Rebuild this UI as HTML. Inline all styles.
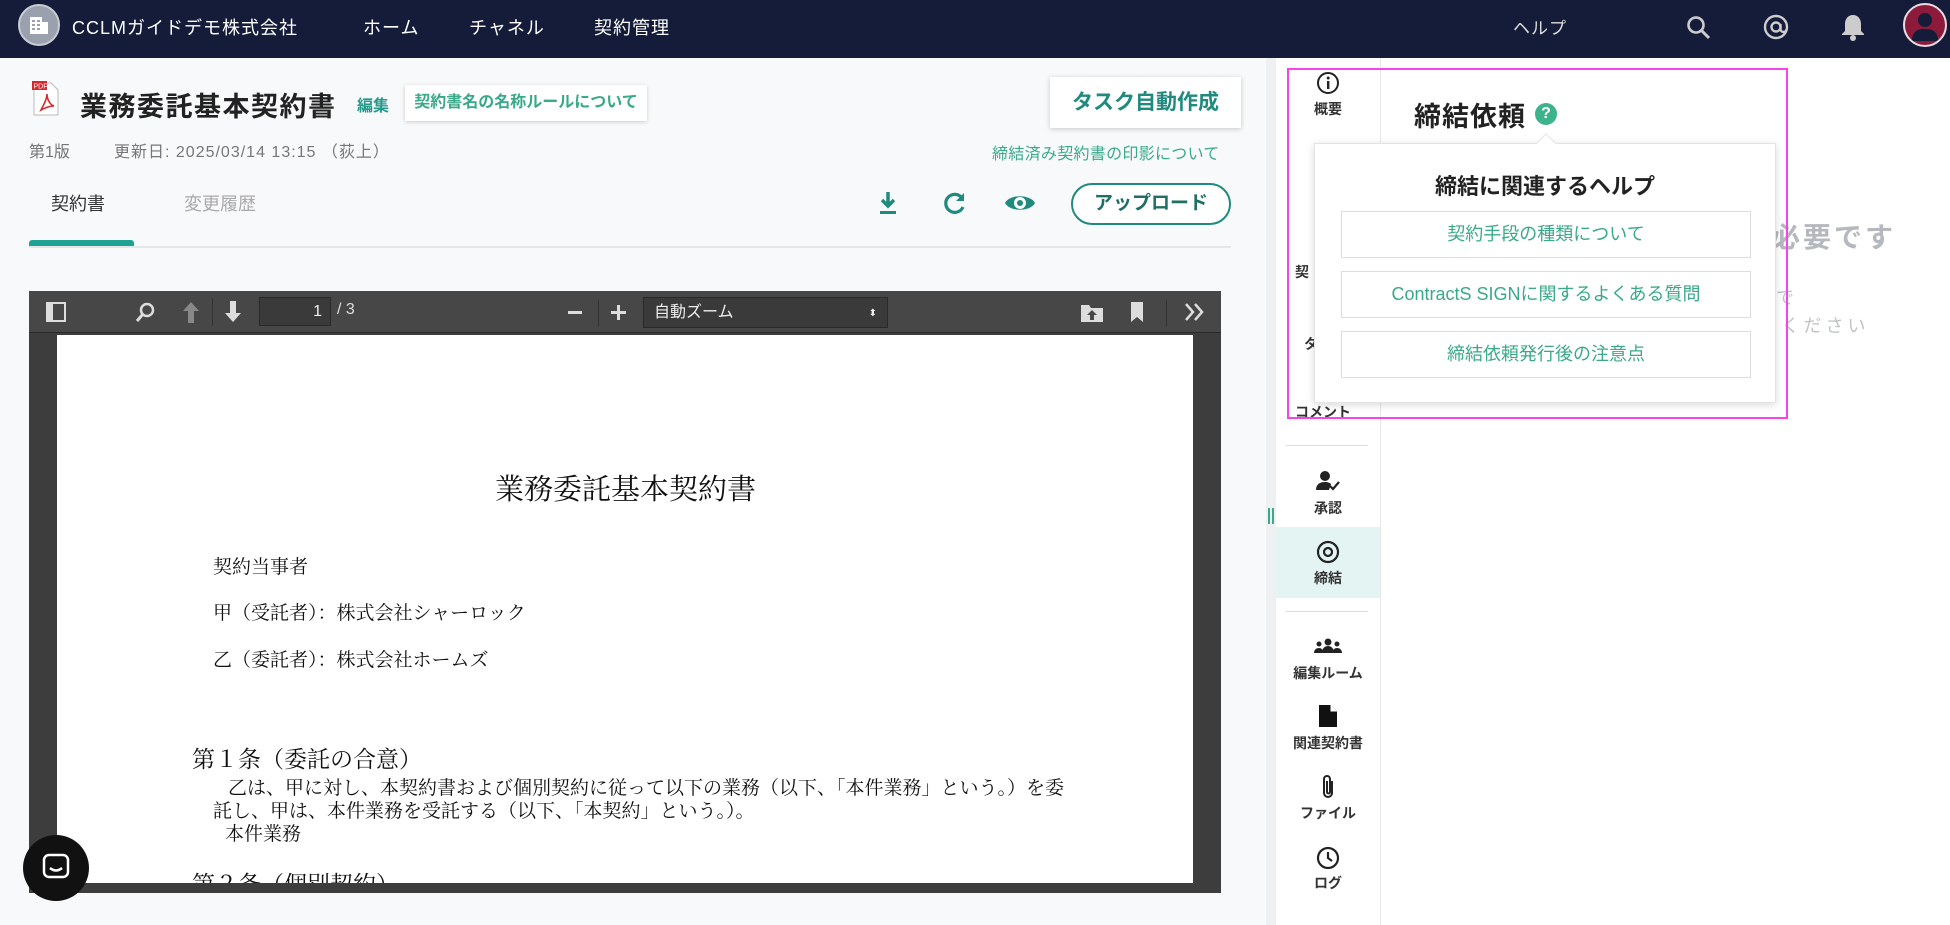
<!DOCTYPE html>
<html><head><meta charset="utf-8"><style>
*{margin:0;padding:0;box-sizing:border-box}
body{width:1950px;height:925px;overflow:hidden;background:#fff;font-family:"Liberation Sans","Noto Sans CJK JP",sans-serif;position:relative;color:#333}
.a{position:absolute;white-space:nowrap}
.nav{left:0;top:0;width:1950px;height:58px;background:#141c3a}
.nt{color:#fff;font-size:18px;top:14px;letter-spacing:1px}
.left{left:0;top:58px;width:1266px;height:867px;background:#f7f9fa}
.teal{color:#23998a}
.sb{font-size:14px;color:#333;text-align:center;width:104px;left:1276px;font-weight:bold}
.hb{left:1341px;width:410px;height:47px;border:1px solid #ddd;background:#fff;color:#3aa98a;font-size:18px;text-align:center;line-height:45px}
.pdf{font-family:"Liberation Serif","Noto Serif CJK SC",serif;color:#111}
</style></head><body>
<div class="a nav"></div>
<div class="a" style="left:18px;top:4px;width:42px;height:42px;border-radius:50%;background:#9aa0ad;border:2px solid #c8ccd4"></div>
<svg class="a" style="left:28px;top:14px" width="22" height="22" viewBox="0 0 22 22"><rect x="2" y="3" width="12" height="17" fill="#fff"/><rect x="14" y="8" width="6" height="12" fill="#fff"/><g fill="#9aa0ad"><rect x="4" y="6" width="3" height="2"/><rect x="9" y="6" width="3" height="2"/><rect x="4" y="10" width="3" height="2"/><rect x="9" y="10" width="3" height="2"/><rect x="4" y="14" width="3" height="2"/><rect x="9" y="14" width="3" height="2"/></g></svg>
<div class="a nt" style="left:72px">CCLMガイドデモ株式会社</div>
<div class="a nt" style="left:363px">ホーム</div>
<div class="a nt" style="left:469px">チャネル</div>
<div class="a nt" style="left:594px">契約管理</div>
<div class="a nt" style="left:1513px;font-size:17px;color:#ddd">ヘルプ</div>
<svg class="a" style="left:1685px;top:14px" width="28" height="28" viewBox="0 0 28 28"><circle cx="11" cy="11" r="7.5" stroke="#ccc" stroke-width="2.6" fill="none"/><path d="M16.5 16.5L24 24" stroke="#ccc" stroke-width="3"/></svg>
<svg class="a" style="left:1762px;top:13px" width="28" height="28" viewBox="0 0 28 28"><circle cx="14" cy="14" r="11" stroke="#ccc" stroke-width="2.4" fill="none"/><circle cx="14" cy="14" r="4.5" stroke="#ccc" stroke-width="2.4" fill="none"/><path d="M18.5 11v5a3 3 0 0 0 6 0" stroke="#ccc" stroke-width="2.4" fill="none"/></svg>
<svg class="a" style="left:1840px;top:12px" width="26" height="30" viewBox="0 0 26 30"><path d="M13 3c-5 0-8 4-8 9v7l-3 3v1h22v-1l-3-3v-7c0-5-3-9-8-9z" fill="#ccc"/><circle cx="13" cy="26" r="3" fill="#ccc"/></svg>
<div class="a" style="left:1903px;top:3px;width:44px;height:44px;border-radius:50%;background:#8c1a3a;border:2px solid #e9dbe0;overflow:hidden"><div class="a" style="left:13px;top:8px;width:14px;height:14px;border-radius:50%;background:#141c3a"></div><div class="a" style="left:7px;top:24px;width:26px;height:12px;border-radius:13px 13px 2px 2px;background:#141c3a"></div></div>

<div class="a left"></div>
<div class="a" style="left:1266px;top:58px;width:10px;height:867px;background:#eef0f2"></div>
<div class="a" style="left:1268px;top:508px;width:2px;height:16px;background:#3aa98a"></div>
<div class="a" style="left:1272px;top:508px;width:2px;height:16px;background:#3aa98a"></div>
<div class="a" style="left:1380px;top:58px;width:1px;height:867px;background:#e6e8ea"></div>

<svg class="a" style="left:31px;top:80px" width="30" height="38" viewBox="0 0 30 38"><path d="M3 3h17l7 7v25H3z" fill="#fff" stroke="#bbb"/><rect x="1" y="1" width="15" height="9" fill="#d7262c"/><text x="2.5" y="8.5" font-size="7" fill="#fff" font-family="Liberation Sans">PDF</text><path d="M10 30c3-6 6-11 6-16 0 5 3 11 7 12-5 0-9 2-13 4z" fill="none" stroke="#d7262c" stroke-width="1.6"/></svg>
<div class="a" style="left:80px;top:85px;font-size:27px;font-weight:bold;color:#222;letter-spacing:1.5px">業務委託基本契約書</div>
<div class="a teal" style="left:357px;top:92px;font-size:16px;font-weight:bold">編集</div>
<div class="a" style="left:405px;top:85px;width:242px;height:36px;background:#fff;box-shadow:0 1px 4px rgba(0,0,0,.18);color:#3aa98a;font-size:16px;font-weight:bold;text-align:center;line-height:36px">契約書名の名称ルールについて</div>
<div class="a" style="left:1050px;top:77px;width:191px;height:51px;background:#fff;box-shadow:0 1px 5px rgba(0,0,0,.2);color:#1f8a7d;font-size:21px;font-weight:bold;text-align:center;line-height:51px">タスク自動作成</div>
<div class="a" style="left:29px;top:138px;font-size:16px;color:#777">第1版</div>
<div class="a" style="left:114px;top:138px;font-size:16px;color:#777;letter-spacing:1px">更新日: 2025/03/14 13:15 （荻上）</div>
<div class="a" style="left:992px;top:140px;font-size:16px;color:#3aa98a;letter-spacing:.3px">締結済み契約書の印影について</div>
<div class="a" style="left:51px;top:190px;font-size:18px;color:#333">契約書</div>
<div class="a" style="left:184px;top:190px;font-size:18px;color:#aaa">変更履歴</div>
<div class="a" style="left:29px;top:246px;width:1202px;height:2px;background:#e4e7ea"></div>
<div class="a" style="left:29px;top:240px;width:105px;height:6px;background:#1fa291;border-radius:3px 3px 0 0"></div>
<svg class="a" style="left:877px;top:190px" width="22" height="26" viewBox="0 0 22 26"><path d="M11 2v13M5 10l6 6 6-6" stroke="#1f8a7d" stroke-width="3.5" fill="none"/><rect x="3" y="21" width="16" height="3" fill="#1f8a7d"/></svg>
<svg class="a" style="left:942px;top:190px" width="26" height="26" viewBox="0 0 26 26"><path d="M20 8A9 9 0 1 0 21 17" stroke="#1f8a7d" stroke-width="3.2" fill="none"/><path d="M22 3v8h-8z" fill="#1f8a7d"/></svg>
<svg class="a" style="left:1004px;top:191px" width="32" height="24" viewBox="0 0 32 24"><path d="M1 12C6 3 26 3 31 12 26 21 6 21 1 12z" fill="#1f8a7d"/><circle cx="16" cy="12" r="6" fill="#fff"/><circle cx="16" cy="12" r="3" fill="#1f8a7d"/></svg>
<div class="a" style="left:1071px;top:183px;width:160px;height:42px;border:2px solid #1f8a7d;border-radius:21px;background:#fff;color:#1f6f66;font-size:19px;font-weight:bold;text-align:center;line-height:38px">アップロード</div>

<div class="a" style="left:29px;top:291px;width:1192px;height:602px;background:#3d3d3d"></div>
<div class="a" style="left:29px;top:291px;width:1192px;height:42px;background:#474747;border-bottom:1px solid #2a2a2a"></div>
<svg class="a" style="left:46px;top:302px" width="20" height="20"><rect x="1" y="1" width="18" height="18" fill="none" stroke="#ddd" stroke-width="2"/><rect x="1" y="1" width="6" height="18" fill="#ddd"/></svg>
<svg class="a" style="left:134px;top:301px" width="22" height="22"><circle cx="13" cy="9" r="6" fill="none" stroke="#ddd" stroke-width="2.5"/><path d="M9 13l-6 7" stroke="#ddd" stroke-width="3"/></svg>
<svg class="a" style="left:181px;top:300px" width="20" height="24"><path d="M10 2l8 9h-5v12h-6V11H2z" fill="#888"/></svg>
<div class="a" style="left:212px;top:298px;width:1px;height:28px;background:#333"></div>
<svg class="a" style="left:223px;top:300px" width="20" height="24"><path d="M10 22l8-9h-5V1H7v12H2z" fill="#ddd"/></svg>
<div class="a" style="left:259px;top:297px;width:72px;height:29px;background:#3a3a3a;border:1px solid #2a2a2a;color:#eee;font-size:16px;text-align:right;padding-right:8px;line-height:27px">1</div>
<div class="a" style="left:337px;top:301px;color:#ddd;font-size:16px">/ 3</div>
<div class="a" style="left:568px;top:311px;width:14px;height:3px;background:#ddd"></div>
<div class="a" style="left:598px;top:300px;width:1px;height:26px;background:#333"></div>
<div class="a" style="left:611px;top:311px;width:15px;height:3px;background:#ddd"></div><div class="a" style="left:617px;top:305px;width:3px;height:15px;background:#ddd"></div>
<div class="a" style="left:643px;top:297px;width:245px;height:31px;background:#3a3a3a;border:1px solid #2a2a2a;color:#eee;font-size:16px;line-height:29px;padding-left:10px">自動ズーム<span style="position:absolute;right:10px;font-size:10px;top:1px">⬍</span></div>
<svg class="a" style="left:1080px;top:301px" width="24" height="22"><path d="M1 4h8l2 3h12v14H1z" fill="#ddd"/><path d="M12 9l5 5h-3v5h-4v-5H7z" fill="#474747"/></svg>
<svg class="a" style="left:1130px;top:301px" width="14" height="22"><path d="M1 1h12v20l-6-5-6 5z" fill="#ddd"/></svg>
<div class="a" style="left:1166px;top:300px;width:1px;height:26px;background:#333"></div>
<svg class="a" style="left:1183px;top:302px" width="22" height="20"><path d="M3 2l7 8-7 8M12 2l7 8-7 8" stroke="#ddd" stroke-width="2.5" fill="none"/></svg>
<div class="a" style="left:57px;top:335px;width:1136px;height:548px;background:#fff;overflow:hidden">
<div class="a pdf" style="left:438px;top:132px;font-size:29px">業務委託基本契約書</div>
<div class="a pdf" style="left:156px;top:217px;font-size:19px">契約当事者</div>
<div class="a pdf" style="left:156px;top:263px;font-size:19px">甲（受託者）：株式会社シャーロック</div>
<div class="a pdf" style="left:156px;top:310px;font-size:19px">乙（委託者）：株式会社ホームズ</div>
<div class="a pdf" style="left:135px;top:406px;font-size:23px">第１条（委託の合意）</div>
<div class="a pdf" style="left:171px;top:438px;font-size:19px">乙は、甲に対し、本契約書および個別契約に従って以下の業務（以下、「本件業務」という。）を委</div>
<div class="a pdf" style="left:156px;top:461px;font-size:19px">託し、甲は、本件業務を受託する（以下、「本契約」という。）。</div>
<div class="a pdf" style="left:168px;top:484px;font-size:19px">本件業務</div>
<div class="a pdf" style="left:135px;top:531px;font-size:23px">第２条（個別契約）</div>
</div>
<div class="a" style="left:23px;top:835px;width:66px;height:66px;border-radius:50%;background:#111"></div>
<svg class="a" style="left:42px;top:853px" width="28" height="30"><rect x="2" y="2" width="24" height="22" rx="5" fill="none" stroke="#fff" stroke-width="2.5"/><path d="M8 15q6 5 12 0" stroke="#fff" stroke-width="2.5" fill="none"/></svg>

<svg class="a" style="left:1316px;top:71px" width="24" height="24"><circle cx="12" cy="12" r="10" fill="none" stroke="#222" stroke-width="2"/><rect x="11" y="10" width="2.4" height="8" fill="#222"/><circle cx="12.2" cy="7" r="1.5" fill="#222"/></svg>
<div class="a sb" style="top:99px">概要</div>
<div class="a" style="left:1295px;top:262px;font-size:14px;font-weight:bold">契</div>
<div class="a" style="left:1304px;top:334px;font-size:14px;font-weight:bold">タ</div>
<div class="a" style="left:1295px;top:402px;font-size:14px;font-weight:bold">コメント</div>
<div class="a" style="left:1286px;top:445px;width:82px;height:1px;background:#ddd"></div>
<svg class="a" style="left:1316px;top:470px" width="26" height="22"><circle cx="9" cy="6" r="5" fill="#222"/><path d="M0 20c0-6 4-8 9-8 3 0 5 1 6 2l-2 6z" fill="#222"/><path d="M14 16l3 3 6-7" stroke="#222" stroke-width="2.2" fill="none"/></svg>
<div class="a sb" style="top:498px">承認</div>
<div class="a" style="left:1276px;top:527px;width:104px;height:71px;background:#e3f4f2"></div>
<svg class="a" style="left:1316px;top:540px" width="24" height="24"><circle cx="12" cy="12" r="10" fill="none" stroke="#222" stroke-width="2.2"/><circle cx="12" cy="12" r="4" fill="none" stroke="#222" stroke-width="2.2"/></svg>
<div class="a sb" style="top:568px">締結</div>
<div class="a" style="left:1286px;top:611px;width:82px;height:1px;background:#ddd"></div>
<svg class="a" style="left:1313px;top:638px" width="30" height="16"><circle cx="15" cy="4" r="3.5" fill="#222"/><path d="M9 15c0-5 3-7 6-7s6 2 6 7z" fill="#222"/><circle cx="6" cy="6" r="2.5" fill="#222"/><circle cx="24" cy="6" r="2.5" fill="#222"/><path d="M1 15c0-3 2-5 5-5s4 2 4 5zM20 15c0-3 1-5 4-5s5 2 5 5z" fill="#222"/></svg>
<div class="a sb" style="top:663px">編集ルーム</div>
<svg class="a" style="left:1318px;top:704px" width="20" height="24"><path d="M1 1h12l6 6v16H1z" fill="#111"/><path d="M13 1v6h6" fill="#fff" stroke="#fff"/></svg>
<div class="a sb" style="top:733px">関連契約書</div>
<svg class="a" style="left:1319px;top:774px" width="18" height="26"><path d="M13 7v12a4 4 0 0 1-8 0V5a3 3 0 0 1 6 0v13a1.5 1.5 0 0 1-3 0V7" fill="none" stroke="#222" stroke-width="2"/></svg>
<div class="a sb" style="top:803px">ファイル</div>
<svg class="a" style="left:1316px;top:846px" width="24" height="24"><circle cx="12" cy="12" r="10" fill="none" stroke="#222" stroke-width="2.2"/><path d="M12 6v6l4 3" stroke="#222" stroke-width="2.2" fill="none"/></svg>
<div class="a sb" style="top:873px">ログ</div>

<div class="a" style="left:1414px;top:95px;font-size:27px;font-weight:bold;color:#222;letter-spacing:1px">締結依頼</div>
<div class="a" style="left:1535px;top:103px;width:22px;height:22px;border-radius:50%;background:#3cb38a;color:#fff;font-size:16px;font-weight:bold;text-align:center;line-height:22px">?</div>
<div class="a" style="left:1741px;top:216px;font-size:28px;font-weight:bold;color:#b5b8be;letter-spacing:3px">が必要です</div>
<div class="a" style="left:1776px;top:284px;font-size:18px;color:#c0c3c8">で</div>
<div class="a" style="left:1760px;top:312px;font-size:18px;color:#c0c3c8;letter-spacing:4px">てください</div>

<div class="a" style="left:1314px;top:143px;width:462px;height:260px;background:#fff;border:1px solid #e4e4e4;box-shadow:0 2px 8px rgba(0,0,0,.15)"></div>
<div class="a" style="left:1539px;top:136px;width:14px;height:14px;background:#fff;transform:rotate(45deg);border-left:1px solid #e4e4e4;border-top:1px solid #e4e4e4"></div>
<div class="a" style="left:1314px;top:169px;width:462px;text-align:center;font-size:22px;font-weight:bold;color:#222">締結に関連するヘルプ</div>
<div class="a hb" style="top:211px">契約手段の種類について</div>
<div class="a hb" style="top:271px">ContractS SIGNに関するよくある質問</div>
<div class="a hb" style="top:331px">締結依頼発行後の注意点</div>
<div class="a" style="left:1287px;top:68px;width:501px;height:351px;border:2px solid #f545e8"></div>
</body></html>
